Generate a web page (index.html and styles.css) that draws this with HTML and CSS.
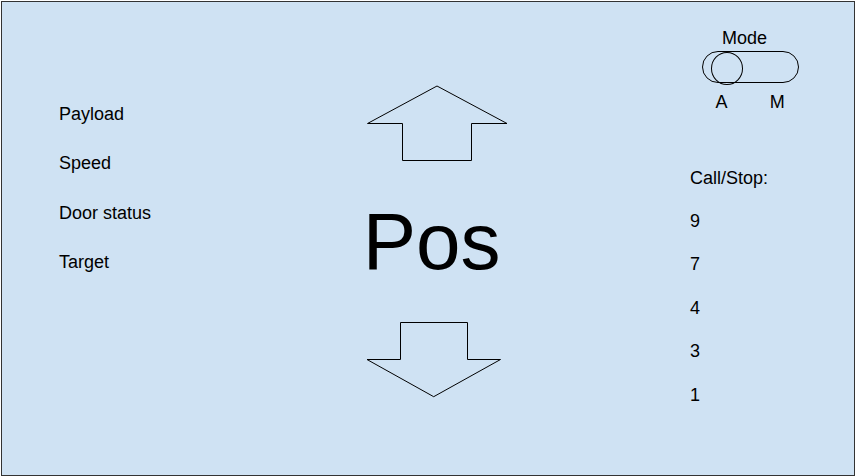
FILE: index.html
```html
<!DOCTYPE html>
<html lang="en">
<head>
    <meta charset="UTF-8">
    <meta name="viewport" content="width=device-width, initial-scale=1.0">
    <title>Elevator Panel</title>
    <link rel="stylesheet" href="styles.css">
</head>
<body>
    <div class="panel">
        <div class="info">
            <div class="label">Payload</div>
            <div class="label">Speed</div>
            <div class="label">Door status</div>
            <div class="label">Target</div>
        </div>
        <div class="center">
            <svg class="arrow up" width="150" height="80" viewBox="0 0 150 80">
                <polygon points="77,3 7.5,40.5 42.5,40.5 42.5,77.5 111.5,77.5 111.5,40.5 147,40.5" />
            </svg>
            <div class="pos">Pos</div>
            <svg class="arrow down" width="150" height="80" viewBox="0 0 150 80">
                <polygon points="40.5,2.5 107.5,2.5 107.5,39.5 140.5,39.5 73.7,76.7 7,39.5 40.5,39.5" />
            </svg>
        </div>
        <div class="side">
            <div class="mode">
                <div class="mode-title">Mode</div>
                <div class="switch"><div class="knob"></div></div>
                <div class="mode-labels">
                    <span class="mode-a">A</span>
                    <span class="mode-m">M</span>
                </div>
            </div>
            <div class="calls">
                <div class="label">Call/Stop:</div>
                <div class="label">9</div>
                <div class="label">7</div>
                <div class="label">4</div>
                <div class="label">3</div>
                <div class="label">1</div>
            </div>
        </div>
    </div>
</body>
</html>
```

FILE: styles.css
```css
body { margin: 0; font-family: "Liberation Sans", Arial, sans-serif; color: #000; background: #fff; }
.panel { box-sizing: border-box; width: 854px; height: 475px; margin: 1px 0 0 1px; border: 1px solid #333; background-color: #cfe2f3; display: flex; }
.label { font-size: 18px; line-height: 20px; white-space: nowrap; }
.info { width: 301px; padding: 101.5px 0 0 57px; display: flex; flex-direction: column; gap: 29.6px; }
.center { width: 150px; padding-top: 81px; display: flex; flex-direction: column; }
.arrow { display: block; }
.arrow polygon { fill: none; stroke: #000; stroke-width: 1; }
.pos { font-size: 80px; line-height: 80px; margin: 38.9px 0 0 2.7px; }
.down { margin-top: 38px; }
.side { margin-left: 180px; padding-top: 26.3px; }
.mode { margin-left: 12px; width: 97px; }
.mode-title { font-size: 18px; line-height: 20px; padding-left: 20px; }
.switch { position: relative; box-sizing: border-box; width: 97px; height: 32px; margin-top: 2.7px; border: 1px solid #000; border-radius: 16px; }
.knob { position: absolute; left: 8px; top: 0; box-sizing: border-box; width: 32px; height: 33px; border: 1px solid #000; border-radius: 50%; }
.mode-labels { position: relative; height: 20px; margin-top: 8.7px; font-size: 18px; line-height: 20px; }
.mode-a { position: absolute; left: 13.5px; }
.mode-m { position: absolute; left: 67.7px; }
.calls { margin-top: 56px; display: flex; flex-direction: column; gap: 23.4px; }
```
